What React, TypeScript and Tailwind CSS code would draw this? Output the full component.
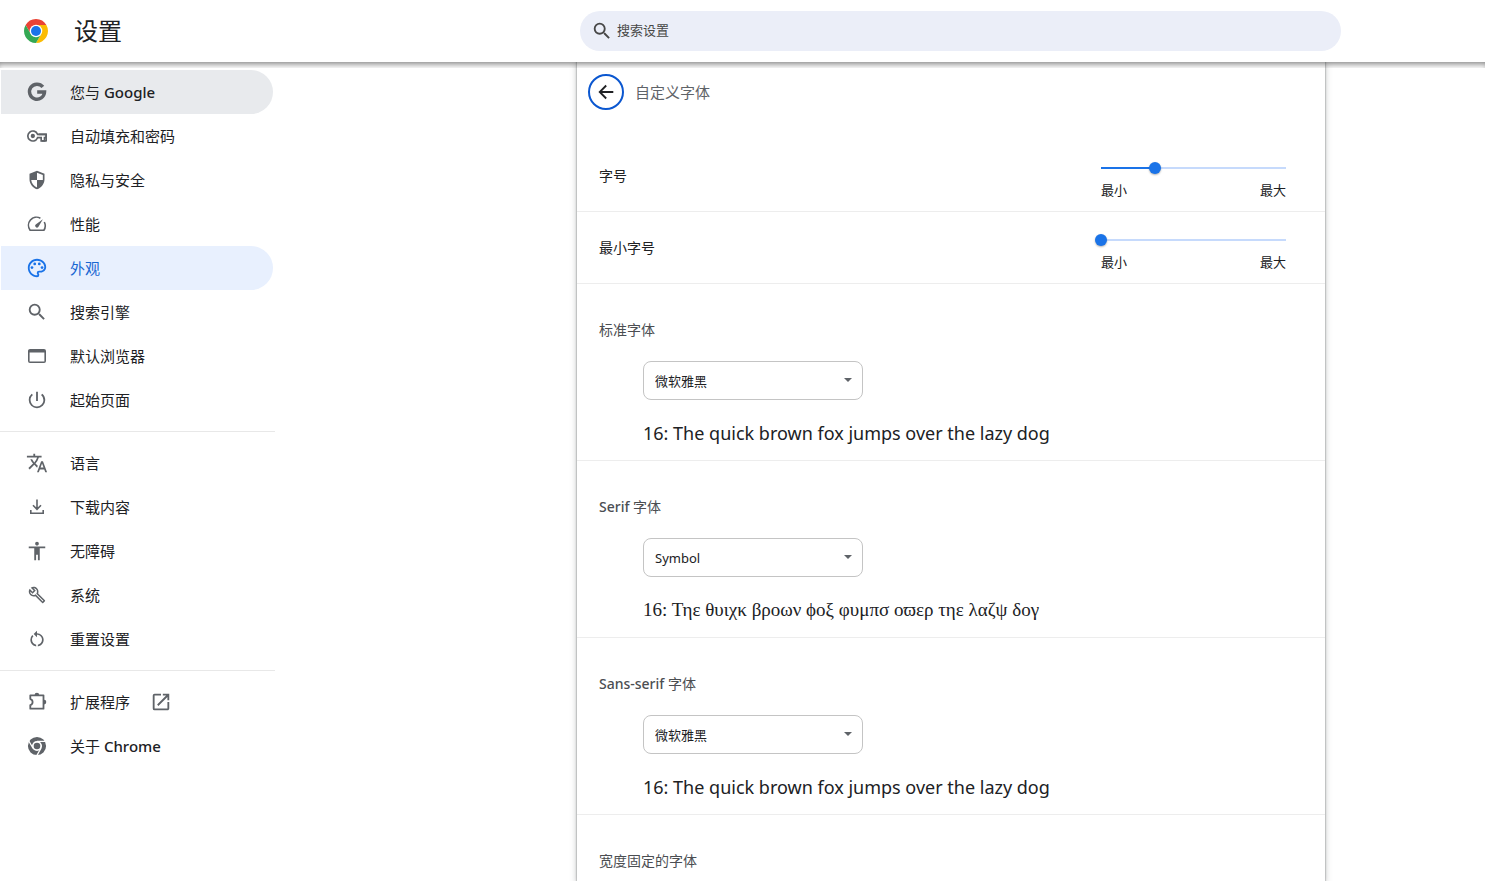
import { useState, type ReactNode } from "react";
import {
  MdAccessibility,
  MdOpenInNew,
  MdOutlineBuild,
  MdOutlinePalette,
  MdPowerSettingsNew,
  MdRestartAlt,
  MdSearch,
  MdTranslate,
} from "react-icons/md";

function ChromeLogo() {
  return (
    <svg viewBox="0 0 48 48" className="size-6" aria-hidden="true">
      <path fill="#ea4335" d="M24 12h20.78A24 24 0 0 0 3.21 12l10.4 18z" />
      <path fill="#fbbc04" d="M34.39 30 24 48A24 24 0 0 0 44.78 12H24z" />
      <path fill="#34a853" d="M13.61 30 3.22 12A24 24 0 0 0 24 48l10.39-18z" />
      <circle cx="24" cy="24" r="12.500" fill="#fff" />
      <circle cx="24" cy="24" r="10" fill="#1a73e8" />
    </svg>
  );
}

function GoogleIcon() {
  return (
    <svg viewBox="0 0 24 24" className="size-[22px]" fill="none" stroke="currentColor" strokeWidth="3.800">
      <path d="M18.400 6.500A8.200 8.200 0 1 0 20.200 12H12.200" />
    </svg>
  );
}

function KeyIcon() {
  return (
    <svg viewBox="0 0 24 24" className="size-5" fill="currentColor">
      <path
        fillRule="evenodd"
        d="M22 19h-6v-4h-2.680A7 7 0 1 1 13.320 9H24v6h-2v4zm-4-2h2v-4h2v-2H11.940l-.23-.67a5 5 0 1 0 0 3.340l.23-.67H18v4z"
      />
      <path d="M14 9h9a1 1 0 0 1 1 1v8a1 1 0 0 1-1 1h-5.500v-2.200H22V11.200h-8z" />
      <circle cx="7" cy="12" r="2.600" />
    </svg>
  );
}

function ShieldIcon() {
  return (
    <svg viewBox="0 0 24 24" className="size-5" fill="currentColor">
      <path
        fillRule="evenodd"
        d="M12 1 3 4.500V11c0 5.550 3.840 10.500 9 12 5.160-1.500 9-6.450 9-12V4.500L12 1zm0 2.200 7 2.700V12h-7V3.200zM12 12v8.900C8.300 19.700 5.500 16.100 5.050 12H12z"
      />
    </svg>
  );
}

function GaugeIcon() {
  return (
    <svg viewBox="0 0 22 22" className="size-[22px]" fill="none" stroke="currentColor" strokeWidth="1.600">
      <path d="M14.400 5.200A8.100 8.100 0 0 0 4.100 17.200h13.800A8.100 8.100 0 0 0 18.300 9" />
      <path fill="currentColor" stroke="none" d="M9.700 14.100a1.800 1.800 0 0 1 0-2.600L16.900 6.300l-4.600 7.800a1.800 1.800 0 0 1-2.600 0z" />
    </svg>
  );
}

function BrowserIcon() {
  return (
    <svg viewBox="0 0 22 22" className="size-[22px]" fill="currentColor">
      <path
        fillRule="evenodd"
        d="M4 4h14a2 2 0 0 1 2 2v10a2 2 0 0 1-2 2H4a2 2 0 0 1-2-2V6c0-1.100.9-2 2-2zm-.4 3.600v8.800h14.800V7.600z"
      />
    </svg>
  );
}

function DownloadIcon() {
  return (
    <svg viewBox="0 0 22 22" className="size-[22px]" fill="none" stroke="currentColor" strokeWidth="1.600">
      <path d="M11 3.500v9.500M7 9.300l4 4 4-4M4.800 14v3.200h12.400V14" />
    </svg>
  );
}

function ExtensionIcon() {
  return (
    <svg viewBox="0 0 22 22" className="size-[22px]" fill="none" stroke="currentColor" strokeWidth="1.800" strokeLinejoin="round">
      <path d="M4.300 4.300h13.200v13.400H4.300v-3.600c1.500-.3 2.300-1.500 2.300-3s-.8-2.700-2.300-3z" />
      <path fill="currentColor" stroke="none" d="M8.600 4a2.300 2.300 0 0 1 4.600 0zM18 8.800a2.300 2.300 0 0 1 0 4.600z" />
    </svg>
  );
}

function ChromeIcon() {
  return (
    <svg viewBox="0 0 24 24" className="size-[22px]" fill="none" stroke="currentColor">
      <circle cx="12" cy="12" r="7.700" strokeWidth="4.400" />
      <circle cx="12" cy="12" r="3.600" fill="currentColor" stroke="none" />
      <path stroke="#fff" strokeWidth="1.400" d="M12 7h9.500M7.670 14.500 2.900 6.300M16.330 14.500 11.600 22.700" />
    </svg>
  );
}

/* Latin runs are set in medium weight, Chinese runs stay regular. */
function MixedText({ text }: { text: string }) {
  return (
    <span>
      {text.split(/([A-Za-z-]+)/).map((part, index) =>
        index % 2 === 1 ? (
          <span key={index} className="font-medium">
            {part}
          </span>
        ) : (
          part
        ),
      )}
    </span>
  );
}

type Item = { label: string; icon: ReactNode; state?: "hover" | "active"; external?: boolean };

const groups: Item[][] = [
  [
    { label: "您与 Google", icon: <GoogleIcon />, state: "hover" },
    { label: "自动填充和密码", icon: <KeyIcon /> },
    { label: "隐私与安全", icon: <ShieldIcon /> },
    { label: "性能", icon: <GaugeIcon /> },
    { label: "外观", icon: <MdOutlinePalette size={22} />, state: "active" },
    { label: "搜索引擎", icon: <MdSearch size={22} /> },
    { label: "默认浏览器", icon: <BrowserIcon /> },
    { label: "起始页面", icon: <MdPowerSettingsNew size={22} /> },
  ],
  [
    { label: "语言", icon: <MdTranslate size={22} /> },
    { label: "下载内容", icon: <DownloadIcon /> },
    { label: "无障碍", icon: <MdAccessibility size={22} /> },
    { label: "系统", icon: <MdOutlineBuild size={18} /> },
    { label: "重置设置", icon: <MdRestartAlt size={20} /> },
  ],
  [
    { label: "扩展程序", icon: <ExtensionIcon />, external: true },
    { label: "关于 Chrome", icon: <ChromeIcon /> },
  ],
];

const itemStyles = {
  hover: "bg-[#e8eaed] text-[#202124]",
  active: "bg-[#e8f0fe] text-[#1967d2]",
  plain: "text-[#202124]",
};

function Sidebar() {
  return (
    <nav aria-label="设置" className="w-[275px] shrink-0 pt-2">
      {groups.map((group, index) => (
        <ul key={index} className={index > 0 ? "mt-[9px] border-t border-[#e8e8e8] pt-[9px]" : ""}>
          {group.map((item) => (
            <li key={item.label} className="pr-0.5 pl-px">
              <a
                href="#"
                className={`flex h-11 items-center rounded-r-full pl-[25px] text-[15px] ${itemStyles[item.state ?? "plain"]}`}
              >
                <span
                  className={`mr-[22px] flex w-[22px] shrink-0 justify-center ${item.state === "active" ? "text-[#1a73e8]" : "text-[#5f6368]"}`}
                >
                  {item.icon}
                </span>
                <MixedText text={item.label} />
                {item.external && <MdOpenInNew size={22} className="ml-5 text-[#5f6368]" />}
              </a>
            </li>
          ))}
        </ul>
      ))}
    </nav>
  );
}

function SliderRow({ id, label, initial }: { id: string; label: string; initial: number }) {
  const [value, setValue] = useState(initial);
  return (
    <div className="flex h-[72px] items-center justify-between border-b border-[#ededed] pr-[39px] pl-[22px]">
      <label htmlFor={id} className="text-sm">
        {label}
      </label>
      <div className="w-[185px] pt-2.5">
        <div className="relative flex h-3 items-center">
          <div className="h-0.5 w-full bg-[#c6dafc]">
            <div className="h-full bg-[#1a73e8]" style={{ width: `${(value / 24) * 100}%` }} />
          </div>
          <input
            id={id}
            type="range"
            min={0}
            max={24}
            value={value}
            onChange={(event) => setValue(Number(event.target.value))}
            className="absolute -inset-x-1.5 top-0 h-3 w-[197px] cursor-pointer appearance-none bg-transparent [&::-webkit-slider-thumb]:size-3 [&::-webkit-slider-thumb]:appearance-none [&::-webkit-slider-thumb]:rounded-full [&::-webkit-slider-thumb]:border-0 [&::-webkit-slider-thumb]:bg-[#1a73e8] [&::-webkit-slider-thumb]:shadow-[0_1px_2px_rgba(0,0,0,0.3)]"
          />
        </div>
        <div className="mt-1.5 flex justify-between text-[13px] leading-5">
          <span>最小</span>
          <span>最大</span>
        </div>
      </div>
    </div>
  );
}

function FontSection({ id, title, value, children }: { id: string; title: string; value: string; children: ReactNode }) {
  return (
    <section className="border-b border-[#ededed] pt-9 pr-5 pb-[15px] pl-[22px]">
      <h2 className="text-sm leading-5 text-[#4b4e52]">
        <label htmlFor={id}>
          <MixedText text={title} />
        </label>
      </h2>
      <div className="pl-11">
        <div className="relative mt-[21px] w-[220px]">
          <select
            id={id}
            defaultValue={value}
            className="block h-[39px] w-full appearance-none rounded-lg border border-[#c4c4c4] bg-white pt-0.5 pl-[11px] text-[13px] text-[#202124]"
          >
            <option>微软雅黑</option>
            <option>Symbol</option>
          </select>
          <svg viewBox="0 0 8 4" className="pointer-events-none absolute top-[17px] right-[11px] h-1 w-2" fill="#5f6368">
            <path d="M0 0h8L4 4z" />
          </svg>
        </div>
        <div className="mt-[21px] leading-6">{children}</div>
      </div>
    </section>
  );
}

const pangram = "16: The quick brown fox jumps over the lazy dog";

export default function App() {
  return (
    <div className="flex min-h-screen flex-col bg-white font-['Noto_Sans','Noto_Sans_CJK_SC',sans-serif] text-[#202124]">
      <header className="relative z-10 flex h-[62px] items-center bg-white">
        <div className="flex w-[275px] shrink-0 items-center gap-[26px] pl-6">
          <ChromeLogo />
          <h1 className="text-2xl leading-8">设置</h1>
        </div>
        <div className="grow-[305] basis-0" />
        <label className="flex h-10 w-[761px] items-center rounded-full bg-[#ebeef8] pl-[11px] text-[#474747]">
          <MdSearch size={22} className="mr-1 shrink-0" />
          <input
            type="text"
            aria-label="搜索设置"
            placeholder="搜索设置"
            className="w-full bg-transparent text-[13px] outline-none placeholder:text-[#474747]"
          />
        </label>
        <div className="grow-[144] basis-0" />
        <div className="pointer-events-none absolute inset-x-0 top-full h-1.5 shadow-[inset_0_5px_6px_-3px_rgba(0,0,0,0.5)]" />
      </header>

      <div className="flex grow">
        <Sidebar />
        <div className="grow-[302] basis-0" />
        <main className="w-[748px] bg-white shadow-[0_0_1px_1px_rgba(60,64,67,0.2),0_1px_6px_1px_rgba(60,64,67,0.25)]">
          <div className="flex h-[78px] items-start gap-[11px] pt-3 pl-[11px]">
            <button
              type="button"
              aria-label="返回"
              className="flex size-9 items-center justify-center rounded-full border-2 border-[#0b57d0]"
            >
              <svg viewBox="0 0 16 16" className="size-4" fill="none" stroke="#202124" strokeWidth="1.800">
                <path d="M15.300 8H2M8.200 1.500 1.700 8l6.500 6.500" />
              </svg>
            </button>
            <h1 className="text-[15px] leading-9 text-[#5f6368]">自定义字体</h1>
          </div>
          <SliderRow id="font-size" label="字号" initial={7} />
          <SliderRow id="min-font-size" label="最小字号" initial={0} />
          <FontSection id="standard" title="标准字体" value="微软雅黑">
            <p className="text-lg leading-6">{pangram}</p>
          </FontSection>
          <FontSection id="serif" title="Serif 字体" value="Symbol">
            <p className="font-['Liberation_Serif',serif] text-[19px] leading-6">
              16: Τηε θυιχκ βροων ϕοξ φυμπσ οϖερ τηε λαζψ δογ
            </p>
          </FontSection>
          <FontSection id="sans" title="Sans-serif 字体" value="微软雅黑">
            <p className="text-lg leading-6">{pangram}</p>
          </FontSection>
          <h2 className="pt-9 pl-[22px] text-sm leading-5 text-[#4b4e52]">宽度固定的字体</h2>
        </main>
        <div className="grow-[160] basis-0" />
      </div>
    </div>
  );
}
